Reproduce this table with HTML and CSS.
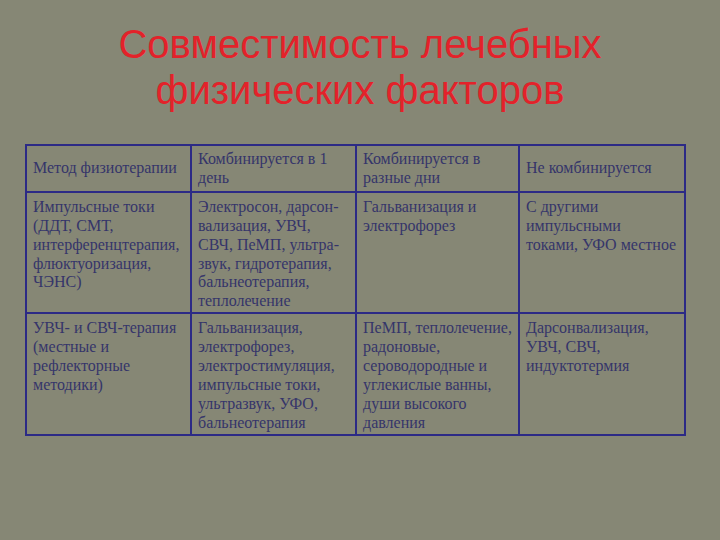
FILE: index.html
```html
<!DOCTYPE html>
<html lang="ru">
<head>
<meta charset="utf-8">
<title>Совместимость лечебных физических факторов</title>
<link rel="stylesheet" href="styles.css">
</head>
<body>
<div class="slide">
  <h1 class="title">Совместимость лечебных<br>физических факторов</h1>
  <table class="grid">
    <colgroup>
      <col class="c1"><col class="c2"><col class="c3"><col class="c4">
    </colgroup>
    <tr class="head">
      <td>Метод физиотерапии</td>
      <td>Комбинируется в 1<br>день</td>
      <td>Комбинируется в<br>разные дни</td>
      <td>Не комбинируется</td>
    </tr>
    <tr>
      <td>Импульсные токи<br>(ДДТ, СМТ,<br>интерференцтерапия,<br>флюктуоризация,<br>ЧЭНС)</td>
      <td>Электросон, дарсон-<br>вализация, УВЧ,<br>СВЧ, ПеМП, ультра-<br>звук, гидротерапия,<br>бальнеотерапия,<br>теплолечение</td>
      <td>Гальванизация и<br>электрофорез</td>
      <td>С другими<br>импульсными<br>токами, УФО местное</td>
    </tr>
    <tr>
      <td>УВЧ- и СВЧ-терапия<br>(местные и<br>рефлекторные<br>методики)</td>
      <td>Гальванизация,<br>электрофорез,<br>электростимуляция,<br>импульсные токи,<br>ультразвук, УФО,<br>бальнеотерапия</td>
      <td>ПеМП, теплолечение,<br>радоновые,<br>сероводородные и<br>углекислые ванны,<br>души высокого<br>давления</td>
      <td>Дарсонвализация,<br>УВЧ, СВЧ,<br>индуктотермия</td>
    </tr>
  </table>
</div>
</body>
</html>
```

FILE: styles.css
```css
html, body {
  margin: 0;
  padding: 0;
  background: #868775;
}
.slide {
  width: 720px;
  height: 540px;
  background: #868775;
  padding-top: 21px;
  box-sizing: border-box;
}
.title {
  margin: 0 0 31px 0;
  font-family: "Liberation Sans", Arial, sans-serif;
  font-weight: normal;
  font-size: 40px;
  line-height: 46px;
  color: #e3222a;
  text-align: center;
}
.grid {
  margin-left: 25px;
  width: 659px;
  border-collapse: collapse;
  table-layout: fixed;
  font-family: "Liberation Serif", "Times New Roman", serif;
  font-size: 16px;
  line-height: 18.9px;
  color: #35356a;
}
.c1 { width: 165px; }
.c2 { width: 165px; }
.c3 { width: 163px; }
.c4 { width: 166px; }
.grid td {
  border: 2px solid #2c2a86;
  padding: 5px 1px 1px 6px;
  vertical-align: top;
  white-space: nowrap;
  overflow: hidden;
}
.grid .head td {
  vertical-align: middle;
  padding-top: 4px;
  padding-bottom: 3px;
}
```
